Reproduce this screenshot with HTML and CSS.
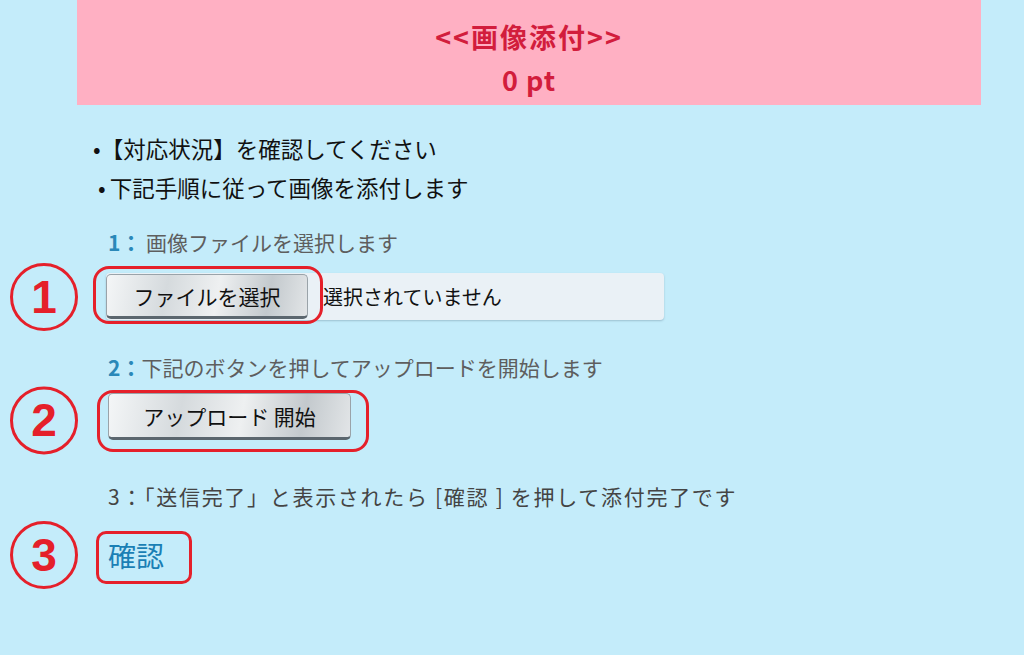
FILE: index.html
```html
<!DOCTYPE html>
<html>
<head>
    <title>画像添付</title>
    <link rel="stylesheet" href="styles.css">
</head>
<body>
    <div class="header">
        <div class="title">&lt;&lt;画像添付&gt;&gt;</div>
        <div class="points">0 pt</div>
    </div>

    <ul class="notes">
        <li>•【対応状況】を確認してください</li>
        <li><span class="dot">•</span>下記手順に従って画像を添付します</li>
    </ul>

    <div class="steps">
        <div class="step-label"><span class="num">1：</span> 画像ファイルを選択します</div>
        <div class="control-row row-file">
            <div class="mark">1</div>
            <div class="file-box">
                <div class="ring">
                    <span class="button">ファイルを選択</span>
                </div>
                <span class="file-name">選択されていません</span>
            </div>
        </div>

        <div class="step-label"><span class="num">2：</span>下記のボタンを押してアップロードを開始します</div>
        <div class="control-row row-upload">
            <div class="mark mark-low">2</div>
            <div class="ring ring-wide">
                <span class="button button-upload">アップロード 開始</span>
            </div>
        </div>

        <div class="step-label step-last">3：「送信完了」と表示されたら [確認 ] を押して添付完了です</div>
        <div class="control-row row-confirm">
            <div class="mark">3</div>
            <div class="ring ring-link">
                <a class="link" href="#">確認</a>
            </div>
        </div>
    </div>
</body>
</html>
```

FILE: styles.css
```css
body {
    margin: 0;
    padding-bottom: 80px;
    background: #c4ecfa;
    font-family: "Noto Sans CJK JP", "Noto Sans", sans-serif;
    color: #111;
}

.header {
    margin: 0 43px 0 77px;
    height: 105px;
    box-sizing: border-box;
    padding-top: 22px;
    background: #ffb0c3;
    color: #d21d3c;
    font-weight: bold;
    font-size: 27px;
    text-align: center;
    display: flex;
    flex-direction: column;
    gap: 13px;
}

.title,
.points {
    line-height: 30px;
}

.title {
    letter-spacing: 2px;
}

.points {
    letter-spacing: 1px;
}

.notes {
    list-style: none;
    margin: 24px 0 0 93px;
    padding: 0;
    font-size: 22.5px;
}

.notes li {
    line-height: 39px;
}

.notes .dot {
    margin: 0 4px 0 5px;
}

.steps {
    margin-top: 20px;
    padding-left: 108px;
}

.step-label {
    font-size: 21px;
    line-height: 30px;
    color: #5e5e5e;
}

.step-label .num {
    color: #2a88b8;
    font-weight: bold;
}

.step-last {
    color: #444;
    letter-spacing: 1.7px;
}

.control-row {
    position: relative;
    display: flex;
    align-items: center;
}

.row-file {
    margin: 16px 0 32px;
}

.row-upload {
    margin: 11px 0 41px;
}

.row-confirm {
    margin-top: 26px;
}

.mark {
    position: absolute;
    left: -98px;
    top: 50%;
    transform: translateY(-50%);
    width: 62px;
    height: 62px;
    border: 3px solid #e5202a;
    border-radius: 50%;
    color: #e5202a;
    font-family: "Liberation Sans", sans-serif;
    font-weight: bold;
    font-size: 46px;
    line-height: 62px;
    text-align: center;
}

.mark-low {
    transform: translateY(-45%);
}

.file-box {
    display: flex;
    align-items: center;
    width: 558px;
    height: 47px;
    margin-left: -2px;
    background: #eaf1f6;
    border-radius: 4px;
    box-shadow: 0 1px 2px rgba(80, 110, 130, 0.35);
}

.ring {
    position: relative;
}

.ring::after {
    content: "";
    position: absolute;
    left: -13px;
    right: -15px;
    top: -8px;
    bottom: -5px;
    border: 3px solid #e5202a;
    border-radius: 16px;
}

.ring-wide::after {
    left: -11px;
    right: -18px;
    top: -3px;
    bottom: -12px;
}

.ring-link::after {
    left: -12px;
    right: -28px;
    top: -6px;
    bottom: -11px;
    border-radius: 10px;
}

.button {
    display: block;
    width: 202px;
    height: 45px;
    box-sizing: border-box;
    line-height: 42px;
    text-align: center;
    font-size: 21px;
    color: #111;
    background: linear-gradient(100deg, #f4f6f7 0%, #d5dadd 30%, #eef0f1 55%, #c3c9cd 80%, #e2e5e7 100%);
    border: 1px solid #9aa3a9;
    border-bottom: 3px solid #5b666e;
    border-radius: 5px;
}

.file-name {
    margin-left: 15px;
    font-size: 20px;
}

.button-upload {
    width: 243px;
    height: 47px;
    line-height: 44px;
}

.link {
    display: block;
    font-size: 28px;
    line-height: 36px;
    color: #1a7fb5;
    text-decoration: none;
}
```
